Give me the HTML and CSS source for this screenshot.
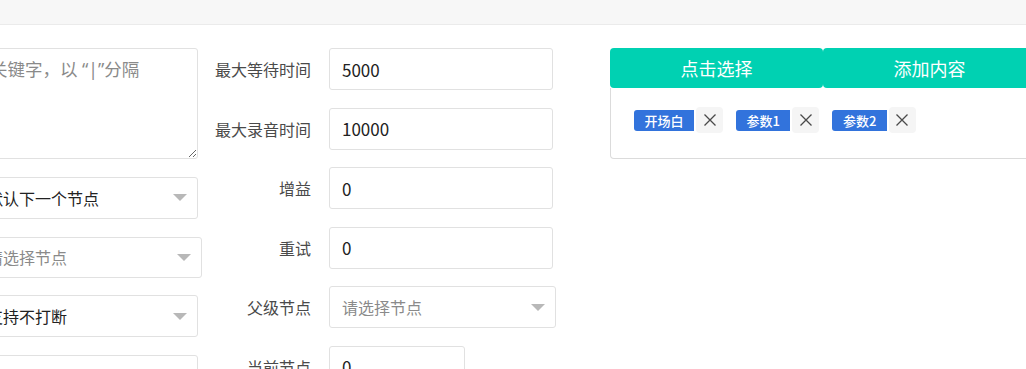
FILE: index.html
```html
<!DOCTYPE html>
<html lang="zh-CN">
<head>
    <meta charset="UTF-8">
    <meta name="viewport" content="width=device-width, initial-scale=1.0">
    <title>节点配置</title>
    <link rel="stylesheet" href="styles.css">
</head>
<body>
    <div class="topbar"></div>
    <div class="main">
        <div class="col-left">
            <textarea class="textarea" placeholder="关键字，以 “|”分隔"></textarea>
            <div class="select">
                <span>默认下一个节点</span>
                <svg class="arrow" width="14" height="7" viewBox="0 0 14 7"><path d="M0 0h14L7 7z"/></svg>
            </div>
            <div class="select select-wide">
                <span class="placeholder">请选择节点</span>
                <svg class="arrow" width="14" height="7" viewBox="0 0 14 7"><path d="M0 0h14L7 7z"/></svg>
            </div>
            <div class="select">
                <span>支持不打断</span>
                <svg class="arrow" width="14" height="7" viewBox="0 0 14 7"><path d="M0 0h14L7 7z"/></svg>
            </div>
            <input class="input" value="">
        </div>

        <div class="col-mid">
            <div class="row">
                <label class="label">最大等待时间</label>
                <input class="input" value="5000">
            </div>
            <div class="row">
                <label class="label">最大录音时间</label>
                <input class="input" value="10000">
            </div>
            <div class="row">
                <label class="label">增益</label>
                <input class="input" value="0">
            </div>
            <div class="row">
                <label class="label">重试</label>
                <input class="input" value="0">
            </div>
            <div class="row">
                <label class="label">父级节点</label>
                <div class="select select-mid">
                    <span class="placeholder">请选择节点</span>
                    <svg class="arrow" width="14" height="7" viewBox="0 0 14 7"><path d="M0 0h14L7 7z"/></svg>
                </div>
            </div>
            <div class="row">
                <label class="label">当前节点</label>
                <input class="input input-short" value="0">
            </div>
        </div>

        <div class="col-right">
            <div class="buttons">
                <button class="btn">点击选择</button>
                <button class="btn">添加内容</button>
            </div>
            <div class="tag-box">
                <div class="tags">
                    <span class="tag">开场白</span>
                    <span class="tag-delete"><svg width="12" height="12" viewBox="0 0 12 12"><path d="M0.5 0.5l11 11M11.5 0.5l-11 11"/></svg></span>
                </div>
                <div class="tags">
                    <span class="tag">参数1</span>
                    <span class="tag-delete"><svg width="12" height="12" viewBox="0 0 12 12"><path d="M0.5 0.5l11 11M11.5 0.5l-11 11"/></svg></span>
                </div>
                <div class="tags">
                    <span class="tag">参数2</span>
                    <span class="tag-delete"><svg width="12" height="12" viewBox="0 0 12 12"><path d="M0.5 0.5l11 11M11.5 0.5l-11 11"/></svg></span>
                </div>
            </div>
        </div>
    </div>
</body>
</html>
```

FILE: styles.css
```css
body {
    margin: 0;
    font-family: "Noto Sans CJK SC", "Noto Sans", sans-serif;
    background-color: #fff;
    overflow: hidden;
    color: #363636;
}
.topbar {
    height: 24px;
    background-color: #f7f7f7;
    border-bottom: 1px solid #ebebeb;
}
.main {
    display: flex;
    align-items: flex-start;
    padding-top: 23px;
}
.col-left {
    width: 224px;
    margin-left: -26px;
    display: flex;
    flex-direction: column;
    gap: 17.6px;
    flex-shrink: 0;
}
.col-mid {
    margin-left: 13px;
    display: flex;
    flex-direction: column;
    gap: 17.6px;
    flex-shrink: 0;
}
.row {
    display: flex;
    align-items: center;
}
.label {
    width: 100px;
    padding-right: 18px;
    text-align: right;
    font-size: 16px;
    color: #4a4a4a;
}
.input,
.textarea,
.select {
    box-sizing: border-box;
    width: 224px;
    height: 42px;
    border: 1px solid #e1e1e1;
    border-radius: 3px;
    background: #fff;
    font-family: inherit;
    font-size: 17px;
    color: #222;
    padding: 0 12px;
    outline: none;
    margin: 0;
}
.textarea {
    height: 111.4px;
    padding: 6px 12px 6px 15px;
    font-family: "Noto Sans", "Noto Sans CJK SC", sans-serif;
    font-size: 17.5px;
    line-height: 28px;
    resize: vertical;
    display: block;
}
.textarea::placeholder {
    color: #8a8a8a;
}
.select {
    display: flex;
    align-items: center;
    justify-content: space-between;
    padding: 0 10px 0 12px;
    font-size: 16px;
}
.select-wide {
    width: 228px;
    height: 41px;
}
.select-mid {
    width: 227px;
}
.placeholder {
    color: #8a8a8a;
}
.arrow {
    fill: #b8b8b8;
    flex-shrink: 0;
}
.input-short {
    width: 136px;
}
.col-right {
    margin-left: 54px;
    width: 426px;
    flex-shrink: 0;
}
.buttons {
    display: flex;
}
.btn {
    width: 213px;
    height: 40px;
    border: none;
    border-radius: 4px;
    background-color: #00d1b2;
    color: #fff;
    font-family: inherit;
    font-size: 18px;
    cursor: pointer;
}
.tag-box {
    height: 71px;
    box-sizing: border-box;
    border: 1px solid #dbdbdb;
    border-top: none;
    border-radius: 0 0 4px 4px;
    padding: 19px 23px;
    display: flex;
    align-items: flex-start;
    gap: 13px;
}
.tags {
    display: flex;
    align-items: center;
    gap: 2px;
}
.tag {
    height: 21px;
    line-height: 21px;
    padding: 0 10.5px;
    background-color: #3273dc;
    color: #fff;
    font-size: 13px;
    font-weight: 500;
    border-radius: 3px 0 0 3px;
}
.tag-delete {
    width: 27px;
    height: 26px;
    background-color: #f5f5f5;
    border-radius: 4px;
    display: flex;
    align-items: center;
    justify-content: center;
}
.tag-delete svg {
    stroke: #4a4a4a;
    stroke-width: 1.3;
}
```
